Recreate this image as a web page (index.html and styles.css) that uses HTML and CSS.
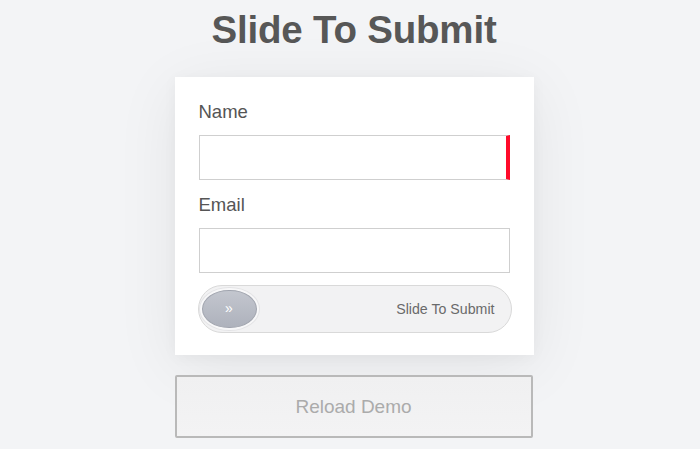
FILE: index.html
```html
<!DOCTYPE html>
<html lang="en">
<head>
<meta charset="utf-8">
<title>Slide To Submit</title>
<link rel="stylesheet" href="styles.css">
</head>
<body>
<main class="page">
  <h1 class="title">Slide To Submit</h1>
  <form class="card">
    <label class="label" for="name">Name</label>
    <input class="field field-invalid" id="name" type="text">
    <label class="label" for="email">Email</label>
    <input class="field" id="email" type="email">
    <div class="slider">
      <div class="knob"><span class="chev">&raquo;</span></div>
      <span class="slider-text">Slide To Submit</span>
    </div>
  </form>
  <button class="reload" type="button">Reload Demo</button>
</main>
</body>
</html>
```

FILE: styles.css
```css
* { box-sizing: border-box; }
html, body { margin: 0; padding: 0; }
body {
  background: #f3f4f6;
  font-family: "Liberation Sans", Arial, Helvetica, sans-serif;
  color: #555;
  height: 449px;
  overflow: hidden;
}
.page {
  width: 359px;
  margin: 0 auto;
  position: relative;
  left: 4px;
  display: flex;
  flex-direction: column;
}
.title {
  margin: 8px 0 0;
  text-align: center;
  font-size: 38.5px;
  line-height: 44px;
  font-weight: bold;
  color: #575757;
  letter-spacing: -0.2px;
}
.card {
  margin-top: 25px;
  background: #fff;
  padding: 24px 24px 22px;
  display: flex;
  flex-direction: column;
  box-shadow: 0 12px 60px rgba(0, 0, 0, 0.07), 0 2px 14px rgba(0, 0, 0, 0.04);
}
.label {
  font-size: 18.5px;
  line-height: 21px;
  color: #555;
  margin-bottom: 13px;
}
.field {
  height: 44.5px;
  width: 100%;
  border: 1px solid #cfcfcf;
  background: #fff;
  margin: 0 0 14.5px;
  padding: 0 10px;
  font: inherit;
  outline: none;
}
.field-invalid {
  border-right: 4px solid #ff0a2a;
}
.field + .label + .field { margin-bottom: 12.5px; }
.slider {
  height: 48px;
  margin-left: -1px;
  width: calc(100% + 3px);
  border: 1px solid #d9d9d9;
  border-radius: 24px;
  background: #f2f2f3;
  display: flex;
  align-items: center;
  padding: 0 16px 0 3px;
}
.knob {
  width: 55px;
  height: 38px;
  border-radius: 27px / 19px;
  background: linear-gradient(#c3c6ce, #aeb2bc);
  border: 1px solid #a0a4ae;
  box-shadow: 0 0 0 2px #f8f8f9, 0 0 0 3px #e4e4e6;
  display: flex;
  align-items: center;
  justify-content: center;
  margin-top: -1px;
}
.chev {
  color: #fff;
  font-size: 14px;
  line-height: 1;
  margin-top: -2px;
}
.slider-text {
  margin-left: auto;
  font-size: 14.2px;
  color: #6a6a6a;
}
.reload {
  margin-top: 20px;
  height: 63px;
  width: 358px;
  border: 2px solid #b9b9b9;
  border-radius: 2px;
  background: linear-gradient(#f0f0f1, #f3f3f4);
  color: #ababab;
  font-family: "Liberation Sans", Arial, Helvetica, sans-serif;
  font-size: 19px;
  cursor: pointer;
}
```
